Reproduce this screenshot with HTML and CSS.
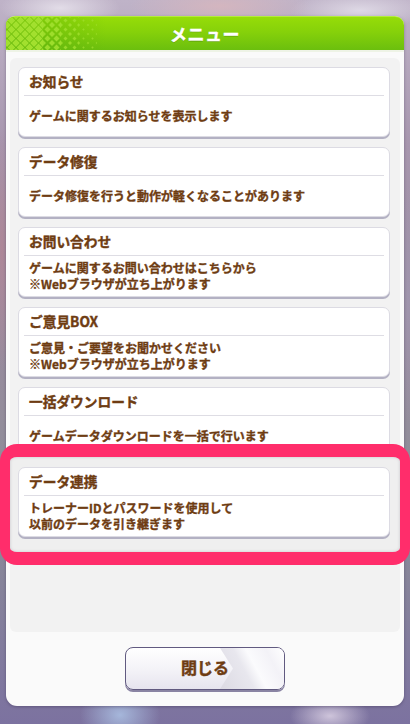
FILE: index.html
```html
<!DOCTYPE html>
<html lang="ja">
<head>
<meta charset="utf-8">
<title>メニュー</title>
<link rel="stylesheet" href="styles.css">
</head>
<body>
<div class="backdrop">
  <div class="dialog">
    <div class="dialog-header">
      <svg class="header-pattern" width="100" height="34" viewBox="0 0 100 34" aria-hidden="true">
        <defs>
          <pattern id="d4" width="9" height="9" patternUnits="userSpaceOnUse" x="1" y="-1">
            <polygon points="4.5,0.6 8.4,4.5 4.5,8.4 0.6,4.5" fill="#a2e02e"/>
            <polygon points="0,-3.9 3.9,0 0,3.9 -3.9,0" fill="#a2e02e"/>
            <polygon points="9,-3.9 12.9,0 9,3.9 5.1,0" fill="#a2e02e"/>
            <polygon points="0,5.1 3.9,9 0,12.9 -3.9,9" fill="#a2e02e"/>
            <polygon points="9,5.1 12.9,9 9,12.9 5.1,9" fill="#a2e02e"/>
          </pattern>
          <pattern id="d3" width="9" height="9" patternUnits="userSpaceOnUse" x="1" y="-1">
            <polygon points="4.5,1.5 7.5,4.5 4.5,7.5 1.5,4.5" fill="#a2e02e"/>
            <polygon points="0,-3 3,0 0,3 -3,0" fill="#a2e02e"/>
            <polygon points="9,-3 12,0 9,3 6,0" fill="#a2e02e"/>
            <polygon points="0,6 3,9 0,12 -3,9" fill="#a2e02e"/>
            <polygon points="9,6 12,9 9,12 6,9" fill="#a2e02e"/>
          </pattern>
          <pattern id="d2" width="9" height="9" patternUnits="userSpaceOnUse" x="1" y="-1">
            <polygon points="4.5,2.5 6.5,4.5 4.5,6.5 2.5,4.5" fill="#a2e02e"/>
            <polygon points="0,-2 2,0 0,2 -2,0" fill="#a2e02e"/>
            <polygon points="9,-2 11,0 9,2 7,0" fill="#a2e02e"/>
            <polygon points="0,7 2,9 0,11 -2,9" fill="#a2e02e"/>
            <polygon points="9,7 11,9 9,11 7,9" fill="#a2e02e"/>
          </pattern>
          <pattern id="d1" width="9" height="9" patternUnits="userSpaceOnUse" x="1" y="-1">
            <polygon points="4.5,3.3 5.7,4.5 4.5,5.7 3.3,4.5" fill="#a2e02e"/>
            <polygon points="0,-1.2 1.2,0 0,1.2 -1.2,0" fill="#a2e02e"/>
            <polygon points="9,-1.2 10.2,0 9,1.2 7.8,0" fill="#a2e02e"/>
            <polygon points="0,7.8 1.2,9 0,10.2 -1.2,9" fill="#a2e02e"/>
            <polygon points="9,7.8 10.2,9 9,10.2 7.8,9" fill="#a2e02e"/>
          </pattern>
          <linearGradient id="shade" x1="0" y1="0" x2="1" y2="0">
            <stop offset="0" stop-color="#5cae0c" stop-opacity="0.55"/>
            <stop offset="0.6" stop-color="#5cae0c" stop-opacity="0.25"/>
            <stop offset="1" stop-color="#5cae0c" stop-opacity="0"/>
          </linearGradient>
        </defs>
        <rect width="100" height="34" fill="url(#shade)"/>
        <rect x="0" y="0" width="37" height="34" fill="url(#d4)"/>
        <rect x="37" y="0" width="18" height="34" fill="url(#d3)" opacity="0.9"/>
        <rect x="55" y="0" width="18" height="34" fill="url(#d2)" opacity="0.8"/>
        <rect x="73" y="0" width="18" height="34" fill="url(#d1)" opacity="0.7"/>
      </svg>
      <h1 class="dialog-title">メニュー</h1>
    </div>
    <div class="dialog-body">
      <div class="panel">
        <div class="card">
          <div class="card-title">お知らせ</div>
          <div class="card-sep"></div>
          <div class="card-text">ゲームに関するお知らせを表示します</div>
        </div>
        <div class="card">
          <div class="card-title">データ修復</div>
          <div class="card-sep"></div>
          <div class="card-text">データ修復を行うと動作が軽くなることがあります</div>
        </div>
        <div class="card">
          <div class="card-title">お問い合わせ</div>
          <div class="card-sep"></div>
          <div class="card-text">ゲームに関するお問い合わせはこちらから<br>※Webブラウザが立ち上がります</div>
        </div>
        <div class="card">
          <div class="card-title">ご意見BOX</div>
          <div class="card-sep"></div>
          <div class="card-text">ご意見・ご要望をお聞かせください<br>※Webブラウザが立ち上がります</div>
        </div>
        <div class="card">
          <div class="card-title">一括ダウンロード</div>
          <div class="card-sep"></div>
          <div class="card-text">ゲームデータダウンロードを一括で行います</div>
        </div>
        <div class="highlight">
          <div class="card">
            <div class="card-title">データ連携</div>
            <div class="card-sep"></div>
            <div class="card-text">トレーナーIDとパスワードを使用して<br>以前のデータを引き継ぎます</div>
          </div>
        </div>
      </div>
      <div class="actions">
        <button class="close-btn" type="button"><span class="close-label">閉じる</span></button>
      </div>
    </div>
  </div>
</div>
</body>
</html>
```
FILE: styles.css
```css
html, body {
  margin: 0;
  padding: 0;
}
body {
  width: 410px;
  height: 724px;
  overflow: hidden;
  font-family: "Noto Sans CJK JP", "Noto Sans", sans-serif;
  background:
    radial-gradient(ellipse 60px 20px at 60px 8px, rgba(230,225,235,0.9), rgba(230,225,235,0)),
    radial-gradient(ellipse 90px 22px at 220px 6px, rgba(214,182,190,0.9), rgba(214,182,190,0)),
    radial-gradient(ellipse 70px 18px at 360px 10px, rgba(225,220,232,0.9), rgba(225,220,232,0)),
    radial-gradient(ellipse 40px 30px at 120px 715px, rgba(170,190,225,0.9), rgba(170,190,225,0)),
    radial-gradient(ellipse 40px 20px at 330px 716px, rgba(215,205,225,0.9), rgba(215,205,225,0)),
    radial-gradient(ellipse 10px 120px at 2px 250px, rgba(176,134,150,0.9), rgba(176,134,150,0)),
    radial-gradient(ellipse 10px 120px at 408px 300px, rgba(160,150,175,0.9), rgba(160,150,175,0)),
    linear-gradient(180deg, #bfb3c8 0%, #a796ae 20%, #9a8c9f 45%, #8d8e98 70%, #7c72a0 100%);
}
.backdrop {
  padding: 16px 6px 18px;
}
.dialog {
  height: 690px;
  background: #fafafa;
  border-radius: 9px 9px 11px 11px;
  box-shadow: 0 1px 3px rgba(40, 30, 60, 0.35);
  display: flex;
  flex-direction: column;
}
.dialog-header {
  position: relative;
  height: 33px;
  background: linear-gradient(180deg, #96dc08 0%, #86d10a 45%, #6bbf0e 100%);
  border-top: 1px solid #b4ec3c;
  border-bottom: 2px solid #eef3e6;
  border-radius: 9px 9px 0 0;
  overflow: hidden;
  display: flex;
  align-items: center;
  justify-content: center;
}
.header-pattern {
  position: absolute;
  left: 0;
  top: 0;
}
.dialog-title {
  position: relative;
  margin: 0;
  font-size: 17px;
  font-weight: 700;
  color: #ffffff;
  letter-spacing: 0.5px;
  line-height: 1;
  -webkit-text-stroke: 0.4px #ffffff;
  text-shadow: 0 1px 0 rgba(70, 120, 10, 0.55);
}
.dialog-body {
  padding: 6px 4px 0;
  display: flex;
  flex-direction: column;
}
.panel {
  height: 574px;
  box-sizing: border-box;
  background: #f2f2f2;
  border-radius: 6px;
  padding: 9px 10px 0 8px;
  display: flex;
  flex-direction: column;
  gap: 10px;
}
.card {
  height: 70px;
  box-sizing: border-box;
  background: #ffffff;
  border: 1px solid #dcdbe3;
  border-radius: 7px;
  box-shadow: 0 2px 0 #b3b1c3;
  display: flex;
  flex-direction: column;
  flex-shrink: 0;
}
.card-title {
  height: 27px;
  box-sizing: border-box;
  padding: 0 10px;
  display: flex;
  align-items: center;
  font-size: 13.7px;
  font-weight: 700;
  color: #6e3c12;
  -webkit-text-stroke: 0.4px #6e3c12;
  line-height: 1;
}
.card-sep {
  height: 1px;
  margin: 0 5px;
  background: #dedde4;
}
.card-text {
  flex: 1;
  padding: 0 10px;
  display: flex;
  flex-direction: column;
  justify-content: center;
  font-size: 12px;
  font-weight: 700;
  color: #6e3c12;
  -webkit-text-stroke: 0.35px #6e3c12;
  line-height: 16px;
}
.highlight {
  position: relative;
  margin: -23px -20px 0 -18px;
  border-style: solid;
  border-color: #ff2d6b;
  border-width: 13px 10px;
  border-radius: 17px;
  background: #efefef;
  padding: 10px 10px 15px 8px;
  box-shadow: inset 0 0 3px rgba(120, 110, 130, 0.35);
}
.actions {
  display: flex;
  justify-content: center;
  padding-top: 15px;
}
.close-btn {
  position: relative;
  width: 160px;
  height: 43px;
  box-sizing: border-box;
  border: 1.5px solid #615a80;
  border-radius: 8px;
  background: linear-gradient(180deg, #ffffff 0%, #f3f2f7 55%, #e6e4ee 100%);
  box-shadow: 0 2px 0 #8a84a3;
  overflow: hidden;
  padding: 0;
  font-family: "Noto Sans CJK JP", "Noto Sans", sans-serif;
  cursor: pointer;
}
.close-btn::after {
  content: "";
  position: absolute;
  top: 0;
  right: 0;
  bottom: 0;
  width: 64px;
  clip-path: polygon(0 0, 100% 0, 100% 100%, 0 100%, 13px 50%);
  background: linear-gradient(62deg, #dcdae3 0%, #e8e7ee 40%, #fbfbfd 55%, #f3f2f7 78%, #ffffff 100%);
}
.close-label {
  position: relative;
  z-index: 1;
  font-size: 16px;
  font-weight: 700;
  color: #6e3c12;
  -webkit-text-stroke: 0.45px #6e3c12;
  letter-spacing: 0;
  line-height: 1;
}
```
